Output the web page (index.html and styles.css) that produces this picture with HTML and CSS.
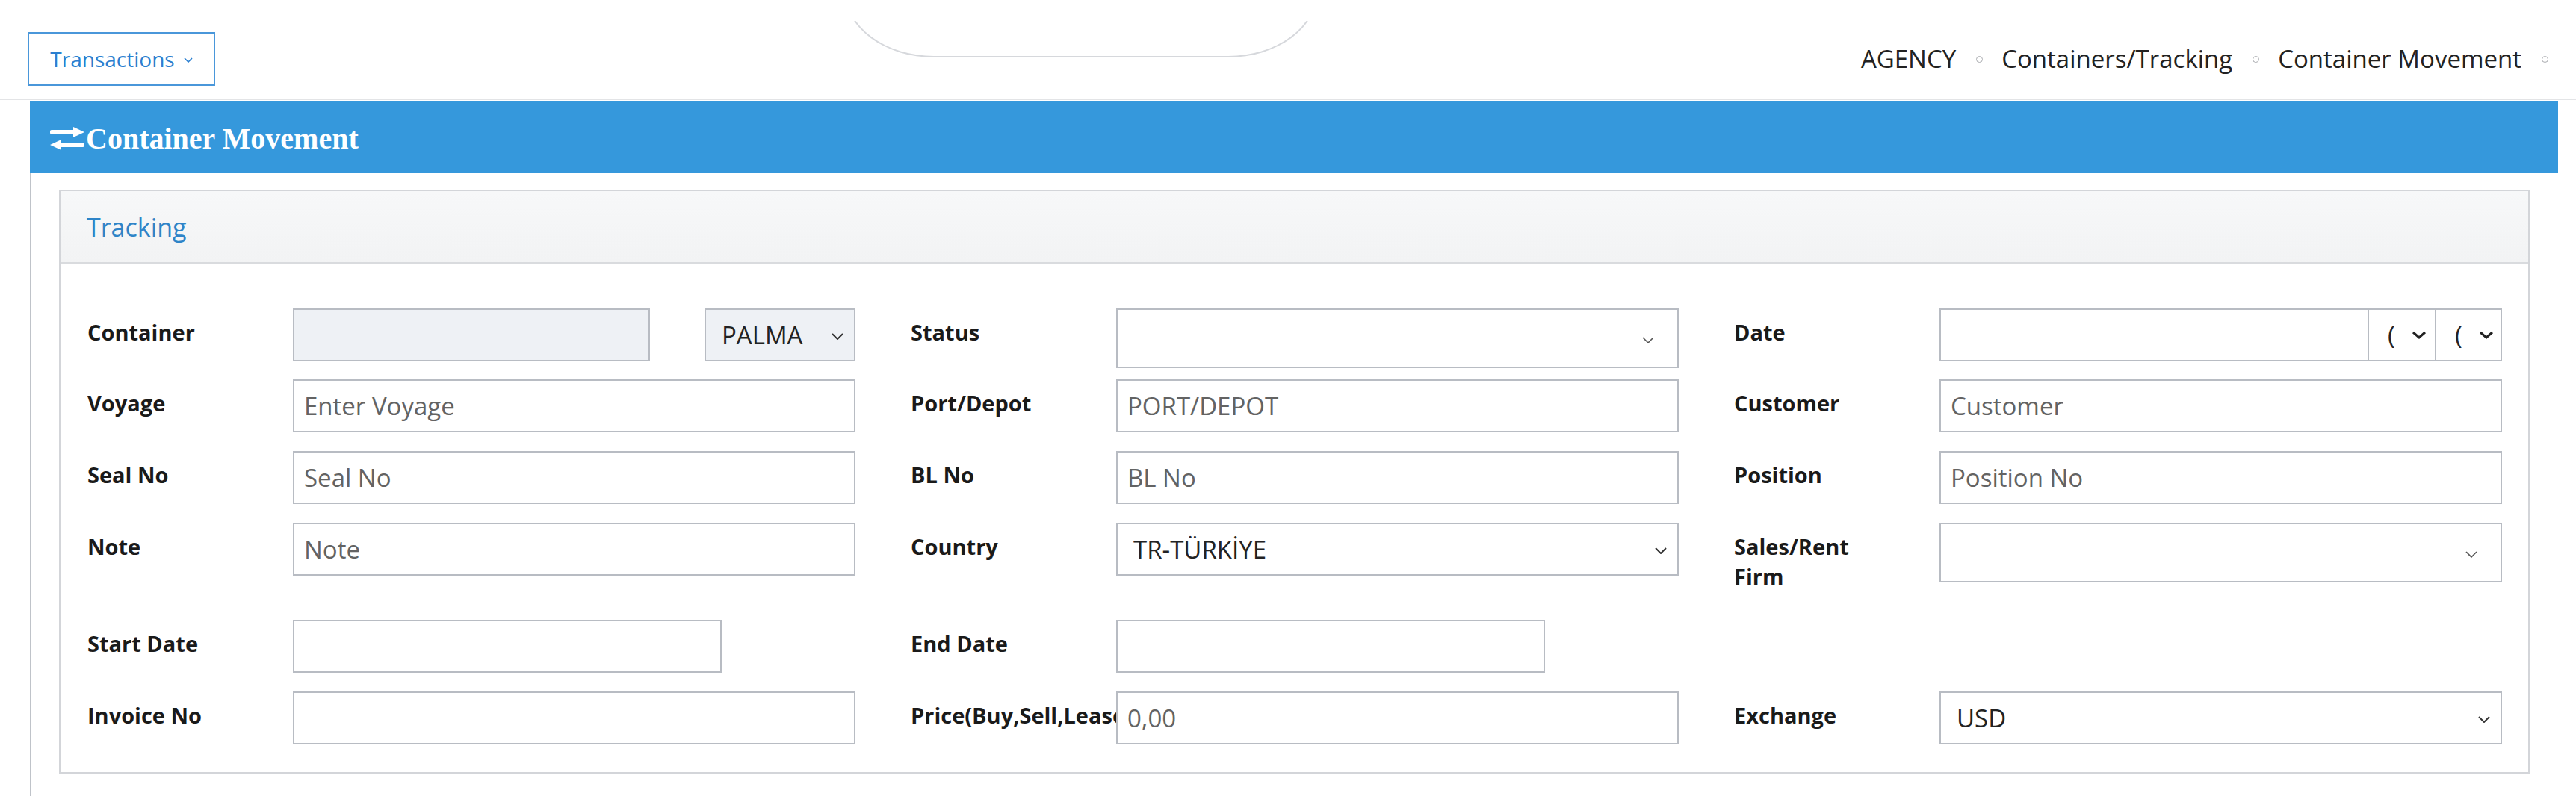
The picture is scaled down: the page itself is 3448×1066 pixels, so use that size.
FILE: index.html
```html
<!DOCTYPE html>
<html lang="en">
<head>
  <meta charset="UTF-8" />
  <title>Container Movement</title>
  <link rel="stylesheet" href="styles.css">
</head>
<body>

  <!-- top bar -->
  <div class="topbar">
    <button class="btn-transactions" type="button">Transactions
      <svg class="chev-sm" viewBox="0 0 12 7" width="12" height="7"><path d="M1 1l5 5 5-5" fill="none" stroke="currentColor" stroke-width="1.6"/></svg>
    </button>
    <div class="top-tab"></div>
    <ul class="breadcrumb">
      <li>AGENCY</li>
      <li>Containers/Tracking</li>
      <li>Container Movement</li>
    </ul>
  </div>

  <div class="portlet">
    <div class="portlet-title">
      <svg class="exchange-icon" viewBox="0 0 46 32" width="46" height="32">
        <rect x="0" y="4" width="34" height="6" rx="2" fill="#fff"/>
        <polygon points="31,0 46,7 31,14" fill="#fff"/>
        <rect x="12" y="21" width="34" height="6" rx="2" fill="#fff"/>
        <polygon points="15,17 0,24 15,31" fill="#fff"/>
      </svg>
      <span>Container Movement</span>
    </div>

    <div class="portlet-body">
      <div class="box">
        <div class="box-head">Tracking</div>

        <div class="box-body form-grid">
          <!-- row 1 -->
          <div class="field">
            <label>Container</label>
            <input class="ctrl ctrl-container" type="text" disabled>
            <div class="ctrl select select-gray select-port"><span>PALMA</span><svg class="chev" viewBox="0 0 16 9"><path d="M1 1l7 7 7-7"/></svg></div>
          </div>
          <div class="field">
            <label>Status</label>
            <div class="ctrl select select-tall"><span></span><svg class="chev chev-thin" viewBox="0 0 16 9"><path d="M1 1l7 7 7-7"/></svg></div>
          </div>
          <div class="field">
            <label>Date</label>
            <div class="date-group">
              <input class="ctrl" type="text">
              <div class="ctrl mini-select"><span>(</span><svg class="chev chev-bold" viewBox="0 0 20 11"><path d="M2 2l8 7 8-7"/></svg></div>
              <div class="ctrl mini-select mini-last"><span>(</span><svg class="chev chev-bold" viewBox="0 0 20 11"><path d="M2 2l8 7 8-7"/></svg></div>
            </div>
          </div>

          <!-- row 2 -->
          <div class="field">
            <label>Voyage</label>
            <input class="ctrl" type="text" placeholder="Enter Voyage">
          </div>
          <div class="field">
            <label>Port/Depot</label>
            <input class="ctrl" type="text" placeholder="PORT/DEPOT">
          </div>
          <div class="field">
            <label>Customer</label>
            <input class="ctrl" type="text" placeholder="Customer">
          </div>

          <!-- row 3 -->
          <div class="field">
            <label>Seal No</label>
            <input class="ctrl" type="text" placeholder="Seal No">
          </div>
          <div class="field">
            <label>BL No</label>
            <input class="ctrl" type="text" placeholder="BL No">
          </div>
          <div class="field">
            <label>Position</label>
            <input class="ctrl" type="text" placeholder="Position No">
          </div>

          <!-- row 4 -->
          <div class="field">
            <label>Note</label>
            <input class="ctrl" type="text" placeholder="Note">
          </div>
          <div class="field">
            <label>Country</label>
            <div class="ctrl select"><span>TR-TÜRKİYE</span><svg class="chev" viewBox="0 0 16 9"><path d="M1 1l7 7 7-7"/></svg></div>
          </div>
          <div class="field">
            <label>Sales/Rent Firm</label>
            <div class="ctrl select select-tall"><span></span><svg class="chev chev-thin" viewBox="0 0 16 9"><path d="M1 1l7 7 7-7"/></svg></div>
          </div>

          <!-- row 5 -->
          <div class="field">
            <label>Start Date</label>
            <input class="ctrl ctrl-short" type="text">
          </div>
          <div class="field">
            <label>End Date</label>
            <input class="ctrl ctrl-short" type="text">
          </div>
          <div></div>

          <!-- row 6 -->
          <div class="field">
            <label>Invoice No</label>
            <input class="ctrl" type="text">
          </div>
          <div class="field">
            <label>Price(Buy,Sell,Lease)</label>
            <input class="ctrl" type="text" placeholder="0,00">
          </div>
          <div class="field">
            <label>Exchange</label>
            <div class="ctrl select"><span>USD</span><svg class="chev" viewBox="0 0 16 9"><path d="M1 1l7 7 7-7"/></svg></div>
          </div>
        </div>
      </div>
    </div>
  </div>

</body>
</html>
```

FILE: styles.css
```css
* {
  margin: 0;
  padding: 0;
  box-sizing: border-box;
}

body {
  font-family: 'Open Sans', 'Liberation Sans', sans-serif;
  background: #ffffff;
  color: #1c1c1c;
  width: 3448px;
  overflow: hidden;
}

/* top bar */
.topbar {
  position: relative;
  height: 134px;
  padding: 24px 37px 0 37px;
  display: flex;
  align-items: center;
  justify-content: space-between;
  border-bottom: 1px solid #e3e4e6;
}

.btn-transactions {
  width: 251px;
  height: 72px;
  border: 2px solid #4a97da;
  background: #fff;
  color: #2a7fd0;
  font-family: inherit;
  font-size: 28px;
  display: flex;
  align-items: center;
  justify-content: center;
  gap: 12px;
}

.chev-sm {
  margin-top: 4px;
}

.top-tab {
  position: absolute;
  left: 1130px;
  top: 28px;
  width: 634px;
  height: 49px;
  overflow: hidden;
}

.top-tab::before {
  content: "";
  position: absolute;
  left: 0;
  right: 0;
  bottom: 0;
  height: 150px;
  border: 2px solid #d6d8dc;
  border-top: none;
  border-radius: 0 0 120px 120px / 0 0 90px 90px;
}

.breadcrumb {
  list-style: none;
  display: flex;
  align-items: center;
  font-size: 33px;
  color: #222;
}

.breadcrumb li {
  display: flex;
  align-items: center;
}

.breadcrumb li::after {
  content: "";
  width: 7px;
  height: 7px;
  border: 1px solid #a9abaf;
  border-radius: 50%;
  margin: 2px 25px 0 27px;
}

.breadcrumb li:last-child::after {
  margin-right: 0;
}

/* portlet */
.portlet {
  margin: 1px 0 0 40px;
  width: 3384px;
}

.portlet-title {
  height: 97px;
  background: #3598dc;
  color: #fff;
  display: flex;
  align-items: center;
  padding: 4px 0 0 27px;
  font-family: 'Liberation Serif', 'Times New Roman', serif;
  font-weight: bold;
  font-size: 40px;
}

.exchange-icon {
  margin-right: 2px;
}

.portlet-body {
  border-left: 2px solid #bfc3c9;
  padding: 22px 38px 30px 37px;
}

.box {
  border: 2px solid #d3d5d9;
}

.box-head {
  height: 97px;
  background: linear-gradient(#f7f8f9, #f2f3f4);
  border-bottom: 2px solid #d9dbde;
  display: flex;
  align-items: center;
  padding-left: 35px;
  font-size: 34px;
  color: #2e84c8;
}

.box-body {
  padding: 60px 0 37px 36px;
}

.form-grid {
  display: grid;
  grid-template-columns: repeat(3, 1028px);
  grid-template-rows: 95px 96px 96px 130px 96px 71px;
  column-gap: 74px;
}

/* fields */
.field {
  display: flex;
  align-items: flex-start;
}

.field label {
  flex: 0 0 275px;
  padding: 12px 66px 0 0;
  font-size: 29px;
  font-weight: bold;
  line-height: 40px;
  color: #1a1a1a;
  overflow: hidden;
}

.ctrl {
  flex: 1;
  min-width: 0;
  height: 71px;
  border: 2px solid #b8bcc3;
  background: #fff;
  padding: 0 13px;
  font-family: inherit;
  font-size: 33px;
  color: #222;
  outline: none;
}

.ctrl::placeholder {
  color: #636363;
}

.ctrl-container {
  flex: 0 0 478px;
  margin-right: 73px;
  background: #eef1f5;
}

.ctrl-short {
  flex: 0 0 574px;
}

/* fake selects */
.select {
  display: flex;
  align-items: center;
  justify-content: space-between;
  padding: 0 14px 0 21px;
}

.select-gray {
  background: #eef1f5;
}

.select-port {
  flex: 0 0 202px;
}

.select-tall {
  height: 80px;
  padding-right: 31px;
}

.chev {
  width: 16px;
  height: 9px;
  flex: none;
  margin-top: 4px;
}

.chev path {
  fill: none;
  stroke: #333;
  stroke-width: 2;
}

.chev-thin path {
  stroke: #555;
  stroke-width: 1.6;
}

.date-group {
  flex: 1;
  display: flex;
}

.mini-select {
  flex: 0 0 92px;
  margin-left: -2px;
  display: flex;
  align-items: center;
  padding: 0 0 0 25px;
  gap: 22px;
}

.mini-last {
  flex-basis: 90px;
}

.chev-bold {
  width: 20px;
  height: 11px;
  margin-top: 0;
}

.chev-bold path {
  stroke: #222;
  stroke-width: 3;
}
```
